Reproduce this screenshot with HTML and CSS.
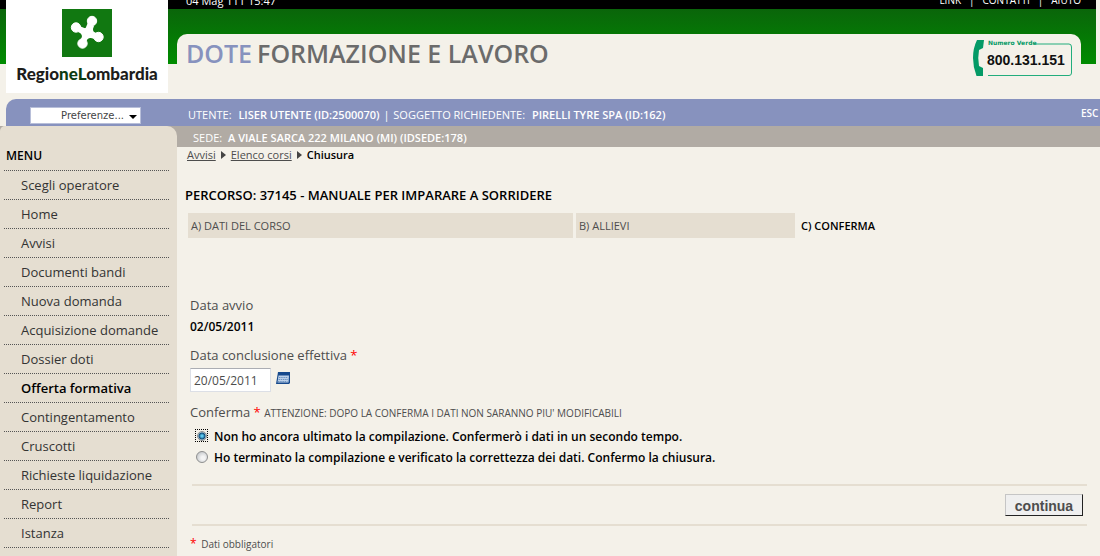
FILE: index.html
```html
<!DOCTYPE html>
<html lang="it">
<head>
<meta charset="utf-8">
<title>Dote Formazione e Lavoro</title>
<link rel="stylesheet" href="styles.css">
</head>
<body>
<header class="header">
  <a class="logo" href="#" aria-label="Regione Lombardia">
    <svg class="logo-mark" viewBox="0 0 50 48" aria-hidden="true">
      <rect width="50" height="48" fill="#117811"/>
      <g fill="#fff" stroke="#fff">
        <path d="M14 18.500L37 28M29.500 12L20.500 34" stroke-width="5.500" fill="none"/>
        <path d="M19 20Q25 20 27 15L32 17Q29 23 35 25L32 30Q26 27 24 33L19 31Q22 25 16 23Z" stroke="none"/>
        <circle cx="14" cy="18.500" r="4.700"/>
        <circle cx="30" cy="12" r="4.700"/>
        <circle cx="36.500" cy="28" r="4.700"/>
        <circle cx="20.500" cy="34.500" r="4.700"/>
      </g>
    </svg>
    <span class="logo-name">Regio<span class="logo-tint">neL</span>ombardia</span>
  </a>
  <div class="header-main">
    <div class="topbar">
      <span>04 Mag 111 15:47</span>
      <nav class="topbar-links"><a href="#">LINK</a><span>|</span><a href="#">CONTATTI</a><span>|</span><a href="#">AIUTO</a></nav>
    </div>
    <div class="title-panel">
      <h1 class="title"><span class="title-dote">DOTE</span><span>FORMAZIONE E LAVORO</span></h1>
      <svg class="phone" viewBox="0 0 100 38" role="img" aria-label="Numero Verde 800.131.151">
        <path d="M5 1H12L11 9L7 11Q5.500 19 7 27L11 29L11 37H4.500Q1 28 1 19Q1 9 5 1Z" fill="#049a66"/>
        <path d="M62 5H97Q99.500 5 99.500 8V34Q99.500 36.500 97 36.500H16" fill="none" stroke="#22ad7c"/>
        <text x="16" y="6" class="phone-label">Numero Verde</text>
        <text x="15" y="26" class="phone-number">800.131.151</text>
      </svg>
    </div>
  </div>
</header>

<div class="userbar">
  <div class="prefs">
    <select class="prefs-select" aria-label="Preferenze"><option>Preferenze...</option></select>
    <svg class="prefs-arrow" viewBox="0 0 8 4" aria-hidden="true"><path d="M0 0H8L4 4Z"/></svg>
  </div>
  <p class="user-info">UTENTE: <b>LISER UTENTE (ID:2500070)</b> <i>|</i> SOGGETTO RICHIEDENTE: <b>PIRELLI TYRE SPA (ID:162)</b></p>
  <a class="logout" href="#">ESC</a>
</div>

<div class="layout">
  <nav class="sidebar">
    <h2 class="menu-title">MENU</h2>
    <ul class="menu">
      <li><a href="#">Scegli operatore</a></li>
      <li><a href="#">Home</a></li>
      <li><a href="#">Avvisi</a></li>
      <li><a href="#">Documenti bandi</a></li>
      <li><a href="#">Nuova domanda</a></li>
      <li><a href="#">Acquisizione domande</a></li>
      <li><a href="#">Dossier doti</a></li>
      <li><a class="current" href="#">Offerta formativa</a></li>
      <li><a href="#">Contingentamento</a></li>
      <li><a href="#">Cruscotti</a></li>
      <li><a href="#">Richieste liquidazione</a></li>
      <li><a href="#">Report</a></li>
      <li><a href="#">Istanza</a></li>
    </ul>
  </nav>
  <main class="main">
    <p class="sede">SEDE: <b>A VIALE SARCA 222 MILANO (MI) (IDSEDE:178)</b></p>
    <nav class="crumbs">
      <a href="#">Avvisi</a>
      <svg viewBox="0 0 5 8" aria-hidden="true"><path d="M0 0L5 4L0 8Z"/></svg>
      <a href="#">Elenco corsi</a>
      <svg viewBox="0 0 5 8" aria-hidden="true"><path d="M0 0L5 4L0 8Z"/></svg>
      <b>Chiusura</b>
    </nav>
    <h2 class="course">PERCORSO: 37145 - MANUALE PER IMPARARE A SORRIDERE</h2>
    <div class="tabs">
      <a class="tab" href="#">A) DATI DEL CORSO</a>
      <a class="tab" href="#">B) ALLIEVI</a>
      <a class="tab active" href="#">C) CONFERMA</a>
    </div>
    <form class="form">
      <p class="label">Data avvio</p>
      <p class="value">02/05/2011</p>
      <label class="label" for="end">Data conclusione effettiva <span class="req">*</span></label>
      <div class="date-row">
        <input class="date" id="end" type="text" value="20/05/2011">
        <button class="calendar" type="button" aria-label="Calendario">
          <svg viewBox="0 0 14 12" aria-hidden="true">
            <path d="M2 0H14V11L13 12H0L1.500 3Z" fill="#16498c"/>
            <path d="M2.500 3.500H13L12.500 10.500H1.500Z" fill="#bcd0e8"/>
            <path d="M3 5.500H12M2.500 7.500H12M2 9.500H11.500" stroke="#6e94c2" stroke-dasharray="1.500 .7"/>
          </svg>
        </button>
      </div>
      <fieldset class="confirm">
        <legend class="label">Conferma <span class="req">*</span> <small>ATTENZIONE: DOPO LA CONFERMA I DATI NON SARANNO PIU' MODIFICABILI</small></legend>
        <label class="option"><span class="radio focused"><input type="radio" name="c" checked></span><span>Non ho ancora ultimato la compilazione. Confermerò i dati in un secondo tempo.</span></label>
        <label class="option"><span class="radio"><input type="radio" name="c"></span><span>Ho terminato la compilazione e verificato la correttezza dei dati. Confermo la chiusura.</span></label>
      </fieldset>
      <div class="actions"><button class="submit" type="button">continua</button></div>
      <p class="note"><span class="req">*</span> Dati obbligatori</p>
    </form>
  </main>
</div>
</body>
</html>
```
FILE: styles.css
```css
* { box-sizing: border-box; }
html { overflow: hidden; }
body {
  margin: 0;
  background: #f4f1e9;
  color: #4d4d4d;
  font-family: "Trebuchet MS", "Open Sans", "Noto Sans", sans-serif;
  font-size: 12px;
}
p, h1, h2, ul { margin: 0; padding: 0; }
a { color: inherit; text-decoration: none; }

.header {
  display: flex;
  gap: 9px;
  height: 99px;
  margin-right: 4px;
  padding-left: 6px;
  background:
    linear-gradient(#000, #000) 0 0 / 100% 9px no-repeat,
    linear-gradient(#0a650a, #008c00) 0 9px / 100% 55px no-repeat;
}
.logo {
  display: flex;
  flex-direction: column;
  align-items: center;
  width: 162px;
  height: 93px;
  padding-top: 9px;
  background: #fff;
}
.logo-mark { width: 50px; height: 48px; }
.logo-name {
  margin-top: 7px;
  color: #1d1d1b;
  font: 900 17px/20px Lato, sans-serif;
}
.logo-tint { color: #0c3c12; }
.header-main { flex: 1; padding-right: 15px; }
.topbar {
  display: flex;
  align-items: flex-end;
  justify-content: space-between;
  height: 9px;
  padding-left: 9px;
  color: #fff;
  font-size: 11px;
  line-height: 16px;
}
.topbar-links { display: flex; gap: 8px; font-size: 10px; line-height: 18px; }
.title-panel {
  display: flex;
  justify-content: space-between;
  margin-top: 25px;
  height: 65px;
  padding: 5px 9px 0 9px;
  border-radius: 10px 10px 0 0;
  background: #f4f1e9;
}
.title { display: flex; gap: 5px; color: #6b6b6b; font-size: 25px; line-height: 28px; font-weight: 600; }
.title-dote { color: #8792be; }
.phone { width: 100px; height: 38px; }
.phone-label { font: bold 6px "DejaVu Sans", sans-serif; fill: #049a66; }
.phone-number { font: bold 14px "Liberation Sans", sans-serif; fill: #111; }

.userbar {
  display: flex;
  height: 27px;
  margin-left: 6px;
  padding-left: 24px;
  border-radius: 10px 0 0 0;
  background: #8792be;
  color: #fff;
  font-size: 11px;
  line-height: 32px;
  white-space: nowrap;
}
.prefs { position: relative; width: 111px; height: 17px; margin: 8px 47px 0 0; }
.prefs-select {
  display: block;
  width: 100%;
  height: 17px;
  padding: 0 16px 0 0;
  appearance: none;
  border: 1px solid #b8bfd9;
  border-radius: 0;
  background: #fff;
  color: #444;
  font: 10px/15px "DejaVu Sans", sans-serif;
  text-align: right;
  text-align-last: right;
}
.prefs-arrow { position: absolute; top: 8px; right: 4px; width: 8px; height: 4px; }
.user-info b { margin-left: 4px; font-weight: 600; }
.user-info i { margin: 0 1px; font-style: normal; }
.logout { width: 19px; margin-left: auto; font-weight: 600; font-size: 10px; line-height: 28px; }

.layout { display: flex; background: linear-gradient(#b1aba4, #b1aba4) 0 0 / 100% 21px no-repeat; }
.sidebar {
  width: 177px;
  min-height: calc(100vh - 126px);
  padding: 20px 8px 0 4px;
  border-radius: 5px 10px 0 0;
  background: #e5ded1;
}
.menu-title { padding: 0 0 4px 2px; color: #000; font-size: 12px; line-height: 20px; font-weight: 600; }
.menu { list-style: none; font-size: 13px; color: #333; }
.menu li { height: 29px; padding: 4px 0 0 17px; border-top: 1px dotted #555; line-height: 20px; white-space: nowrap; }
.menu li:last-child { height: 30px; border-bottom: 1px dotted #555; }
.menu .current { color: #000; font-weight: 600; }

.main { flex: 1; min-width: 0; }
.sede { height: 21px; padding-left: 16px; color: #fff; font-size: 11px; line-height: 24px; }
.sede b { margin-left: 3px; font-weight: 600; }
.crumbs { display: flex; align-items: center; gap: 5px; padding-left: 10px; font-size: 11px; line-height: 16px; }
.crumbs a { text-decoration: underline; }
.crumbs svg { width: 5px; height: 8px; fill: #444; }
.crumbs b { color: #000; font-weight: 600; }
.course { margin: 22px 0 8px 8px; color: #000; font-size: 13px; line-height: 20px; font-weight: 600; }
.tabs { display: grid; grid-template-columns: 385fr 219fr 288fr; gap: 3px; margin: 0 14px 0 11px; }
.tab { height: 25px; padding-left: 3px; background: #e5ded1; font-size: 11px; line-height: 26px; }
.tab.active { background: none; color: #000; font-weight: 600; }

.form { padding: 57px 13px 0; }
.label { display: block; font-size: 13px; line-height: 20px; }
.value { margin: 2px 0 8px; color: #000; font-weight: 600; line-height: 20px; }
.req { color: #f00; }
.date-row { display: flex; align-items: flex-start; gap: 5px; margin-top: 3px; }
.date {
  width: 81px;
  height: 24px;
  padding: 0 3px;
  border: 1px solid #dcdfe6;
  border-top-color: #abadb3;
  background: #fff;
  color: #4d4d4d;
  font: 12px "Trebuchet MS", "Open Sans", "Noto Sans", sans-serif;
}
.calendar { margin-top: 4px; padding: 0; border: 0; background: none; line-height: 0; }
.calendar svg { width: 14px; height: 12px; }
.confirm { margin: 10px 0 0; padding: 0; border: 0; }
.confirm legend { padding: 0; }
.confirm small { font-size: 10px; }
.option { display: flex; align-items: flex-start; gap: 6px; height: 21px; padding-left: 5px; color: #000; font-weight: 600; line-height: 28px; }
.radio { display: grid; place-items: center; width: 13px; height: 13px; margin-top: 6px; }
.radio.focused { outline: 1px dotted #000; outline-offset: -1px; }
.radio input {
  appearance: none;
  width: 12px;
  height: 12px;
  margin: 0;
  border: 1px solid #8e8f8f;
  border-radius: 50%;
  background: radial-gradient(circle at 60% 60%, #f4f4f4 20%, #c5c8cb 80%);
}
.radio input:checked { width: 10px; height: 10px; background: radial-gradient(circle, #5cc8ee 0 1px, #0e4a78 3px, #c5d5e0 4px); }
.actions {
  display: flex;
  justify-content: flex-end;
  margin: 19px 0 0 2px;
  padding: 8px 4px;
  border: solid #e5ded1;
  border-width: 2px 0;
}
.submit {
  width: 78px;
  height: 22px;
  padding: 1px 0 0;
  border: 1px solid;
  border-color: #c5c5c5 #222 #222 #c5c5c5;
  background: #efefef;
  color: #4d4d4d;
  font: bold 14px "Liberation Sans", Arial, sans-serif;
}
.note { margin-top: 10px; font-size: 10px; line-height: 16px; }
.note .req { margin-right: 2px; font-size: 12px; }
```
